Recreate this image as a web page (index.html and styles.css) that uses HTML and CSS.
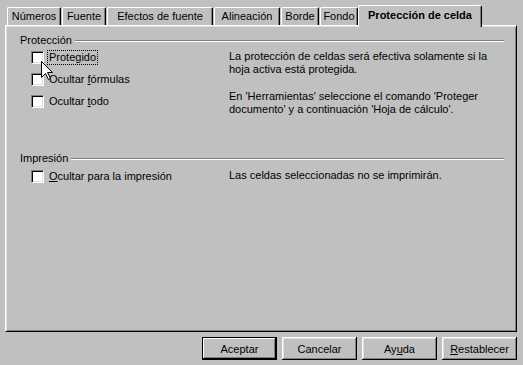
FILE: index.html
```html
<!DOCTYPE html>
<html lang="es">
	<head>
		<meta charset="UTF-8" />
		<title>Atributos de celda</title>
		<link rel="stylesheet" href="styles.css">
	</head>
	<body>
		<div class="dialog">
			<!-- Tabs -->
			<div class="tabs">
				<div class="tab tab-num">Números</div>
				<div class="tab tab-font">Fuente</div>
				<div class="tab tab-effects">Efectos de fuente</div>
				<div class="tab tab-align">Alineación</div>
				<div class="tab tab-border">Borde</div>
				<div class="tab tab-bg">Fondo</div>
				<div class="tab active">Protección de celda</div>
			</div>

			<!-- Tab page -->
			<div class="panel">
				<div class="group">
					<div class="group-title">Protección</div>
					<div class="group-body">
						<div class="options">
							<div class="check"><span class="box"></span><span class="focus">Protegido</span></div>
							<div class="check"><span class="box"></span><span>Ocultar <u>f</u>órmulas</span></div>
							<div class="check"><span class="box"></span><span>Ocultar <u>t</u>odo</span></div>
						</div>
						<div class="note">
							<p>La protección de celdas será efectiva solamente si la<br>hoja activa está protegida.</p>
							<p>En 'Herramientas' seleccione el comando 'Proteger<br>documento' y a continuación 'Hoja de cálculo'.</p>
						</div>
					</div>
				</div>
				<div class="group print">
					<div class="group-title">Impresión</div>
					<div class="group-body">
						<div class="options">
							<div class="check"><span class="box"></span><span><u>O</u>cultar para la impresión</span></div>
						</div>
						<div class="note">
							<p>Las celdas seleccionadas no se imprimirán.</p>
						</div>
					</div>
				</div>
			</div>

			<!-- Buttons -->
			<div class="buttons">
				<button class="default">Aceptar</button>
				<button>Cancelar</button>
				<button>Ay<u>u</u>da</button>
				<button><u>R</u>establecer</button>
			</div>

			<!-- Mouse pointer -->
			<svg class="cursor" width="12" height="19" viewBox="0 0 12 19">
				<polygon points="0.5,0.5 0.5,16.5 4.5,12.5 7.5,18.5 9.5,17.5 6.5,11.5 11.5,11.5" fill="#fff" stroke="#000" stroke-width="1" />
			</svg>
		</div>
	</body>
</html>
```
FILE: styles.css
```css
/* Base styles */
body {
	margin: 0;
	padding: 0;
	background: #c0c0c0;
	color: #000;
	font-family: "Liberation Sans", Arial, sans-serif;
	font-size: 11px;
	line-height: 13px;
}
.dialog {
	position: relative;
	width: 523px;
	height: 365px;
	padding: 5px 6px 0 5px;
	box-sizing: border-box;
}
/* Tabs */
.tabs {
	position: relative;
	z-index: 1;
	display: flex;
	align-items: flex-end;
	gap: 1px;
	padding-left: 2px;
	margin-bottom: -2px;
}
.tab {
	height: 18px;
	margin-bottom: 2px;
	box-sizing: border-box;
	background: #c0c0c0;
	border-top: 1px solid #fff;
	border-left: 1px solid #fff;
	border-right: 1px solid #000;
	border-radius: 2px 2px 0 0;
	box-shadow: inset -1px 0 #808080;
	line-height: 16px;
	text-align: center;
	white-space: nowrap;
}
.tab-num { width: 54px; }
.tab-font { width: 44px; }
.tab-effects { width: 106px; }
.tab-align { width: 66px; }
.tab-border { width: 38px; }
.tab-bg { width: 38px; }
.tab.active {
	width: 124px;
	height: 22px;
	margin: 0 0 0 -1px;
	font-weight: bold;
	line-height: 18px;
}
/* Tab page */
.panel {
	height: 307px;
	padding: 8px 12px 0 14px;
	box-sizing: border-box;
	border-top: 1px solid #fff;
	border-left: 1px solid #fff;
	border-right: 1px solid #000;
	border-bottom: 1px solid #000;
	box-shadow: inset 1px 1px #dfdfdf, inset -1px -1px #808080;
}
.group-title {
	display: flex;
	align-items: center;
	gap: 3px;
	height: 13px;
}
.group-title::after {
	content: "";
	flex: 1;
	border-top: 1px solid #808080;
	border-bottom: 1px solid #fff;
}
.group-body {
	display: grid;
	grid-template-columns: 198px 1fr;
	margin-top: 3px;
	padding-left: 11px;
}
.group.print {
	margin-top: 36px;
}
.group.print .group-body {
	margin-top: 4px;
}
/* Check boxes */
.options {
	display: flex;
	flex-direction: column;
	gap: 8px;
}
.check {
	display: flex;
	align-items: center;
	gap: 5px;
	height: 14px;
	white-space: nowrap;
}
.box {
	width: 13px;
	height: 13px;
	box-sizing: border-box;
	background: #fff;
	border-top: 1px solid #808080;
	border-left: 1px solid #808080;
	border-right: 1px solid #fff;
	border-bottom: 1px solid #fff;
	box-shadow: inset 1px 1px #000, inset -1px -1px #dfdfdf;
}
.focus {
	margin-left: -1px;
	padding: 0 1px;
	outline: 1px dotted #000;
}
.note p {
	margin: 0;
}
.note p + p {
	margin-top: 14px;
}
/* Buttons */
.buttons {
	display: flex;
	justify-content: flex-end;
	gap: 5px;
	margin-top: 5px;
}
.buttons button {
	width: 75px;
	height: 23px;
	padding: 0;
	border: none;
	background: #c0c0c0;
	color: #000;
	font-family: inherit;
	font-size: 11px;
	box-shadow: inset -1px -1px #000, inset 1px 1px #fff, inset -2px -2px #808080, inset 2px 2px #dfdfdf;
}
.buttons button.default {
	border: 1px solid #000;
	box-shadow: inset -1px -1px #000, inset 1px 1px #fff, inset -2px -2px #808080;
}
/* Mouse pointer */
.cursor {
	position: absolute;
	left: 41px;
	top: 61px;
}
```
